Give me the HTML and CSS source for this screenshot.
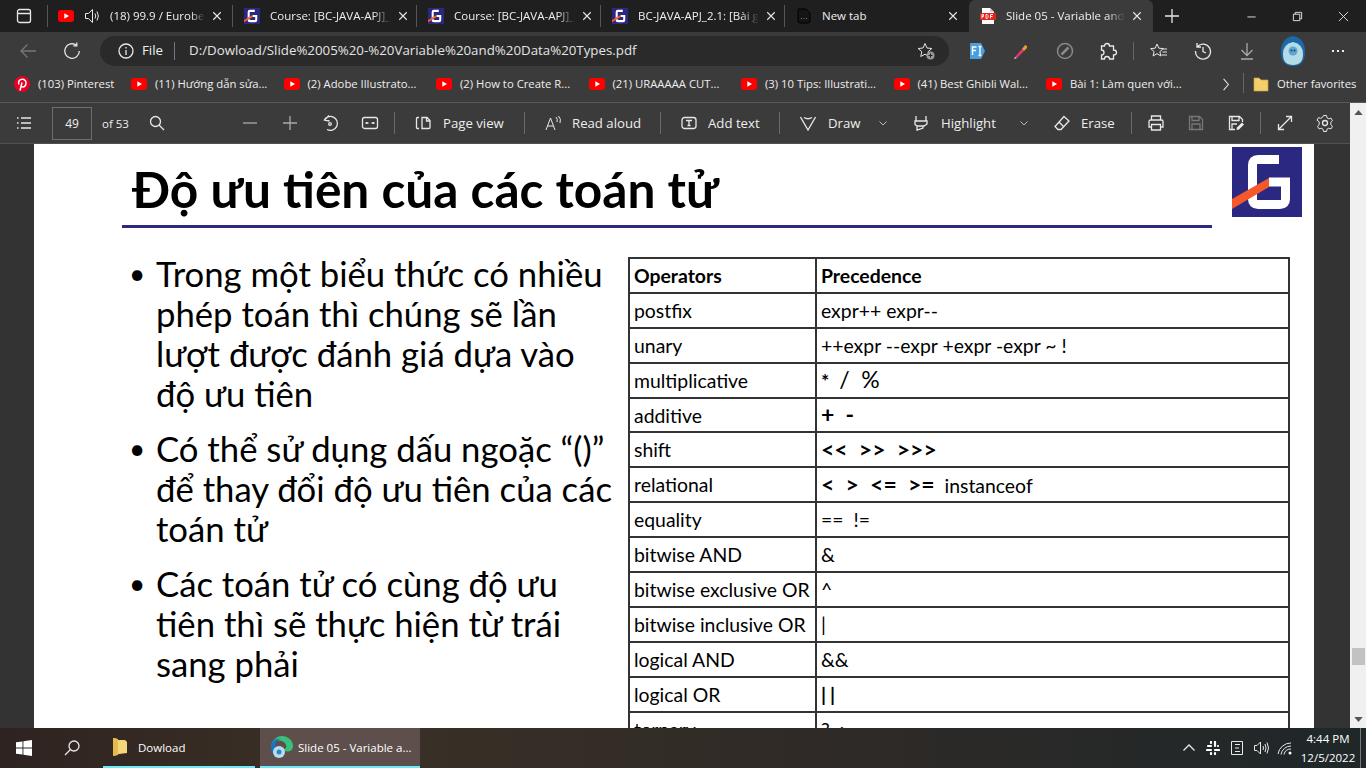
FILE: index.html
```html
<!DOCTYPE html>
<html lang="vi">

<head>
  <meta charset="UTF-8">
  <title>Slide 05 - Variable and Data Types.pdf</title>
  <link rel="stylesheet" href="styles.css">
</head>

<body>
  <svg class="defs" aria-hidden="true">
    <symbol id="yt" viewBox="0 0 16 12">
      <rect width="16" height="12" rx="3" fill="#f00" />
      <path d="M6.3 3.3 11 6l-4.7 2.700z" fill="#fff" />
    </symbol>
    <symbol id="glogo" viewBox="0 0 70 70">
      <rect width="70" height="70" fill="#2a2880" />
      <path d="M47 12.500H26q-5.500 0-5.500 5.500v34q0 5.500 5.500 5.500h22q5.500 0 5.500-5.500V35H37" fill="none" stroke="#fff" stroke-width="9" />
      <path d="M0 52 37 31v9L0 62z" fill="#f4592a" />
    </symbol>
    <symbol id="x" viewBox="0 0 12 12">
      <path d="M1.500 1.500l9 9m0-9l-9 9" fill="none" stroke="#e8e8e8" stroke-width="1.300" />
    </symbol>
    <symbol id="chev" viewBox="0 0 10 10">
      <path d="M1.500 3.500 5 7l3.500-3.500" fill="none" stroke="#bbb" stroke-width="1" />
    </symbol>
  </svg>

  <!-- tab strip -->
  <div class="tabstrip">
    <div class="tab-actions">
      <svg class="ic16" viewBox="0 0 16 16"><path d="M3.500 1.500h9a2 2 0 0 1 2 2v9a2 2 0 0 1-2 2h-9a2 2 0 0 1-2-2v-9a2 2 0 0 1 2-2zM1.500 5.500h13" class="ln" /></svg>
    </div>
    <div class="tab sep-after">
      <svg class="fav" viewBox="0 0 16 12"><use href="#yt" /></svg>
      <svg class="ic16 spk" viewBox="0 0 16 16"><path d="M1.500 5.500h3l4-4v13l-4-4h-3zM11 5.500q1.500 2.500 0 5M13 3.500q2.800 4.500 0 9" class="ln thin" /></svg>
      <span class="tab-title">(18) 99.9 / Eurobeat Mix</span>
      <svg class="tab-x" viewBox="0 0 12 12"><use href="#x" /></svg>
    </div>
    <div class="tab sep-after">
      <svg class="fav" viewBox="0 0 70 70"><use href="#glogo" /></svg>
      <span class="tab-title">Course: [BC-JAVA-APJ]_2.1</span>
      <svg class="tab-x" viewBox="0 0 12 12"><use href="#x" /></svg>
    </div>
    <div class="tab sep-after">
      <svg class="fav" viewBox="0 0 70 70"><use href="#glogo" /></svg>
      <span class="tab-title">Course: [BC-JAVA-APJ]_2.1</span>
      <svg class="tab-x" viewBox="0 0 12 12"><use href="#x" /></svg>
    </div>
    <div class="tab sep-after">
      <svg class="fav" viewBox="0 0 70 70"><use href="#glogo" /></svg>
      <span class="tab-title">BC-JAVA-APJ_2.1: [Bài giảng]</span>
      <svg class="tab-x" viewBox="0 0 12 12"><use href="#x" /></svg>
    </div>
    <div class="tab">
      <svg class="fav" viewBox="0 0 16 16"><path d="M3 1h7l4 4v8a2 2 0 0 1-2 2H4a2 2 0 0 1-2-2V2a1 1 0 0 1 1-1z" fill="#151515" stroke="#000" /><path d="M5 10.500h1m1.500 0h1m1.500 0h1" stroke="#777" /></svg>
      <span class="tab-title plain">New tab</span>
      <svg class="tab-x" viewBox="0 0 12 12"><use href="#x" /></svg>
    </div>
    <div class="tab active">
      <svg class="fav" viewBox="0 0 16 16"><path d="M2 0h8l4 4v12H2z" fill="#fff" /><path d="M10 0l4 4h-4z" fill="#ccc" /><rect x="0" y="5" width="16" height="7" fill="#e2231a" /><path d="M2 6.500v4M2 6.500h1.500v2H2M6 6.500v4h1.200l.8-1v-2l-.8-1zM10.500 6.500v4M10.500 6.500H13M10.500 8.500H12.500" stroke="#fff" fill="none" stroke-width=".9" /></svg>
      <span class="tab-title">Slide 05 - Variable and Data Types</span>
      <svg class="tab-x" viewBox="0 0 12 12"><use href="#x" /></svg>
    </div>
    <div class="new-tab">
      <svg class="ic16" viewBox="0 0 16 16"><path d="M8 1v14M1 8h14" class="ln" /></svg>
    </div>
    <div class="win-btns">
      <button class="win-btn"><svg viewBox="0 0 12 12"><path d="M1.500 6.500h9" class="ln thin" /></svg></button>
      <button class="win-btn"><svg viewBox="0 0 12 12"><path d="M1.500 3.500h7v7h-7zM3.500 3.500v-2h7v7h-2" class="ln thin" /></svg></button>
      <button class="win-btn"><svg viewBox="0 0 12 12"><path d="M1 1l10 10m0-10L1 11" class="ln thin" /></svg></button>
    </div>
  </div>

  <!-- address bar -->
  <div class="toolbar">
    <div class="ib back">
      <svg class="ic18" viewBox="0 0 18 18"><path d="M17 9H2M8.500 2.500 2 9l6.500 6.500" class="ln dim" /></svg>
    </div>
    <div class="ib reload">
      <svg class="ic18" viewBox="0 0 18 18"><path d="M13.500 3.300A7.300 7.300 0 1 0 16.300 9M13.800 0.500v3.400h-3.500" class="ln" /></svg>
    </div>
    <div class="address">
      <svg class="ic16" viewBox="0 0 16 16"><circle cx="8" cy="8" r="7" class="ln" /><path d="M8 7v5M8 4v1.500" class="ln" /></svg>
      <span class="addr-file">File</span>
      <span class="addr-sep"></span>
      <span class="addr-url">D:/Dowload/Slide%2005%20-%20Variable%20and%20Data%20Types.pdf</span>
      <svg class="addr-star" viewBox="0 0 18 18"><path d="M8 1.500l2 4.500 4.800.500-3.600 3.200 1 4.800L8 12.200l-4.200 2.300 1-4.800L1.200 6.500 6 6z" class="ln thin" /><circle cx="13.500" cy="13.500" r="4" fill="#999" /><path d="M13.500 11.500v4M11.500 13.500h4" stroke="#222" /></svg>
    </div>
    <div class="ib ib-first">
      <svg class="ic18" viewBox="0 0 18 18"><path d="M2 1h11l4 8-4 8H2z" fill="#4a9fe0" /><path d="M4.500 13V5h4M4.500 8.500h3.500M10.500 4.500h3M12 4.500v9M10.500 13.500h3" stroke="#fff" stroke-width="1.400" fill="none" /></svg>
    </div>
    <div class="ib">
      <svg class="ic18" viewBox="0 0 18 18"><path d="M3 15 10 7l2 2-7 7z" fill="#e8336c" /><path d="M2 17l1-2 2 1z" fill="#ddd" /><path d="M10 7l3-4 2 1 0 2-3 3z" fill="#f09a28" /></svg>
    </div>
    <div class="ib">
      <svg class="ic18" viewBox="0 0 18 18"><circle cx="9" cy="9" r="7.500" fill="none" stroke="#8a8a8a" stroke-width="1.500" /><path d="M5.500 12.500 12.500 5.500" stroke="#8a8a8a" stroke-width="2.500" /></svg>
    </div>
    <div class="ib">
      <svg class="ic18" viewBox="0 0 18 18"><path d="M7 1.500q2.500 0 2.500 2.500h4v4q3 0 3 2.500t-3 2.500v4h-4q0-2.500-2.500-2.500t-2.500 2.500h-3v-4q2.500 0 2.500-2.500T1.500 8V4h3Q4.500 1.500 7 1.500z" class="ln" /></svg>
    </div>
    <span class="tool-sep"></span>
    <div class="ib">
      <svg class="ic18" viewBox="0 0 18 18"><path d="M7 2l1.800 4.200 4.500.400-3.400 3 1 4.400L7 11.700 3.100 14l1-4.400-3.400-3 4.500-.400zM13 7h4M12.500 10h4.500M11.500 13h5.500" class="ln thin" /></svg>
    </div>
    <div class="ib">
      <svg class="ic18" viewBox="0 0 18 18"><path d="M3.500 4.500A7.500 7.500 0 1 1 1.500 9M3 1v4h4M9 5v4.500l3 1.500" class="ln" /></svg>
    </div>
    <div class="ib">
      <svg class="ic18" viewBox="0 0 18 18"><path d="M9 1v12M3.500 8 9 13.500 14.500 8M3 17h12" class="ln dim2" /></svg>
    </div>
    <div class="ib avatar">
      <svg class="ava" viewBox="0 0 24 30"><path d="M12 0q12 2 12 16 0 14-12 14T0 16Q0 2 12 0z" fill="#1a6aa8" /><path d="M12 6q10 2 10 12 0 11-10 11T2 18Q2 8 12 6z" fill="#b4dce6" /><circle cx="12" cy="15" r="4.500" fill="#5fa5d6" /><circle cx="10.500" cy="14.500" r="1" fill="#245" /><circle cx="13.500" cy="14.500" r="1" fill="#245" /></svg>
    </div>
    <div class="ib more">
      <svg class="ic18" viewBox="0 0 18 18"><path d="M3 9h2M8 9h2M13 9h2" stroke="#eee" stroke-width="2" /></svg>
    </div>
  </div>

  <!-- favorites -->
  <div class="favbar">
    <div class="fav-item first">
      <svg class="fav" viewBox="0 0 16 16"><circle cx="8" cy="8" r="8" fill="#e60023" /><path d="M6 14.500 8 6.500M4.800 8.500C3.800 5 6 3.300 8.300 3.300c2.500 0 3.900 1.700 3.700 3.800-.2 2.300-1.500 3.800-3.100 3.800-1 0-1.700-.6-1.700-1.300" fill="none" stroke="#fff" stroke-width="1.500" /></svg>
      <span>(103) Pinterest</span>
    </div>
    <div class="fav-item"><svg class="fav" viewBox="0 0 16 12"><use href="#yt" /></svg><span>(11) Hướng dẫn sửa...</span></div>
    <div class="fav-item"><svg class="fav" viewBox="0 0 16 12"><use href="#yt" /></svg><span>(2) Adobe Illustrato...</span></div>
    <div class="fav-item"><svg class="fav" viewBox="0 0 16 12"><use href="#yt" /></svg><span>(2) How to Create R...</span></div>
    <div class="fav-item"><svg class="fav" viewBox="0 0 16 12"><use href="#yt" /></svg><span>(21) URAAAAA CUT...</span></div>
    <div class="fav-item"><svg class="fav" viewBox="0 0 16 12"><use href="#yt" /></svg><span>(3) 10 Tips: Illustrati...</span></div>
    <div class="fav-item"><svg class="fav" viewBox="0 0 16 12"><use href="#yt" /></svg><span>(41) Best Ghibli Wal...</span></div>
    <div class="fav-item last"><svg class="fav" viewBox="0 0 16 12"><use href="#yt" /></svg><span>Bài 1: Làm quen với...</span></div>
    <svg class="fav-more" viewBox="0 0 10 16"><path d="M2 1l6 7-6 7" class="ln" /></svg>
    <span class="fav-sep"></span>
    <div class="fav-other">
      <svg class="fav" viewBox="0 0 16 16"><path d="M1 2h5l2 2h7v11H1z" fill="#f3d06a" stroke="#c9a23e" stroke-width=".7" /></svg>
      <span>Other favorites</span>
    </div>
  </div>

  <div class="viewer">
    <div class="viewer-main">
      <!-- pdf toolbar -->
      <div class="pdfbar">
        <div class="pb pb-list"><svg class="ic16" viewBox="0 0 16 16"><path d="M1 3h1.500M5 3h10M1 8h1.500M5 8h10M1 13h1.500M5 13h10" class="ln" /></svg></div>
        <div class="page-box">49</div>
        <span class="page-of">of 53</span>
        <div class="pb pb-search"><svg class="ic16" viewBox="0 0 16 16"><circle cx="6.500" cy="6.500" r="5" class="ln" /><path d="M10 10l5 5" class="ln" /></svg></div>
        <div class="pb pb-minus"><svg class="ic16" viewBox="0 0 16 16"><path d="M1 8h14" class="ln dim2" /></svg></div>
        <div class="pb"><svg class="ic16" viewBox="0 0 16 16"><path d="M8 1v14M1 8h14" class="ln dim2" /></svg></div>
        <div class="pb"><svg class="ic18" viewBox="0 0 18 18"><path d="M3 6.500A7 7 0 1 1 6 15.500M8 1.500 3.500 6l5 1" class="ln" /><circle cx="9" cy="10" r="1.300" class="ln" /></svg></div>
        <div class="pb"><svg class="ic18" viewBox="0 0 18 18"><rect x="1.500" y="3.500" width="15" height="11" rx="2" class="ln" /><path d="M4.500 9h3M13.500 9h-3M5.500 8v2M12.500 8v2" class="ln" /></svg></div>
        <span class="pdf-sep sep-a"></span>
        <div class="tool t-page">
          <svg class="ic16" viewBox="0 0 16 16"><path d="M4 2.500H2.500a1 1 0 0 0-1 1v9a1 1 0 0 0 1 1H4M7 2.500h5l3 3v7a1 1 0 0 1-1 1H7zM11.500 2.500v3.500H15" class="ln" /></svg>
          <span>Page view</span>
        </div>
        <span class="pdf-sep"></span>
        <div class="tool t-read">
          <svg class="ic16" viewBox="0 0 16 16"><path d="M1 15 5.500 3 10 15M2.500 11h6M11 2q2 2 1 5M13.500 1q3 3 1.500 7" class="ln thin" /></svg>
          <span>Read aloud</span>
        </div>
        <span class="pdf-sep"></span>
        <div class="tool t-add">
          <svg class="ic16" viewBox="0 0 16 16"><rect x="1" y="2.500" width="14" height="11" rx="2.500" class="ln" /><path d="M5 5.500h6M8 5.500v5M6.500 10.500h3" class="ln" /></svg>
          <span>Add text</span>
        </div>
        <span class="pdf-sep"></span>
        <div class="tool t-draw">
          <svg class="ic16" viewBox="0 0 16 16"><path d="M.5 2 8 15 15.500 2M4 2.500q4 2.500 8 0" class="ln" /></svg>
          <span>Draw</span>
          <svg class="chev" viewBox="0 0 10 10"><use href="#chev" /></svg>
        </div>
        <div class="tool t-high">
          <svg class="ic16" viewBox="0 0 16 16"><path d="M3 1v5h10V1M2 6h12v3l-3 2H4l-2-1.500zM4 11v4l6-2v-2" class="ln" /></svg>
          <span>Highlight</span>
          <svg class="chev" viewBox="0 0 10 10"><use href="#chev" /></svg>
        </div>
        <div class="tool t-erase">
          <svg class="ic16" viewBox="0 0 16 16"><path d="M10 1.500 15 6l-8 8.500H4L1 11.500zM5 7l5 5" class="ln" /></svg>
          <span>Erase</span>
        </div>
        <span class="pdf-sep"></span>
        <div class="pb pb-print"><svg class="ic18" viewBox="0 0 18 18"><path d="M4.500 6V2h9v4M4.500 13H2V7.500A1.500 1.500 0 0 1 3.500 6h11A1.500 1.500 0 0 1 16 7.500V13h-2.500M4.500 10.500h9v5.500h-9z" class="ln" /></svg></div>
        <div class="pb"><svg class="ic16" viewBox="0 0 16 16"><path d="M1.500 1.500h10l3 3v10h-13zM4 1.500v4h7v-4M4 14.500v-5.500h8v5.500" class="ln dim" /></svg></div>
        <div class="pb"><svg class="ic16" viewBox="0 0 16 16"><path d="M7 14.500H1.500v-13h10l3 3V7M4 1.500v4h7v-4M4 14v-5h5" class="ln" /><path d="M8.500 15 9 12.500 14 7.500l2 2-5 5z" fill="#eee" /></svg></div>
        <span class="pdf-sep sep-b"></span>
        <div class="pb pb-expand"><svg class="ic16" viewBox="0 0 16 16"><path d="M1.500 14.500l13-13M9 1.500h5.500V7M1.500 9v5.500H7" class="ln" /></svg></div>
        <div class="pb"><svg class="ic18" viewBox="0 0 18 18"><circle cx="9" cy="9" r="2.500" class="ln" /><path d="M7.500 1.500h3l.5 2.300 1.800 1 2.200-.7 1.500 2.600-1.700 1.600v2.400l1.700 1.600-1.500 2.600-2.200-.7-1.800 1-.5 2.300h-3l-.5-2.300-1.800-1-2.200.7-1.500-2.600 1.700-1.600V7.800L1 6.200l1.500-2.600 2.200.7 1.800-1z" class="ln thin" /></svg></div>
      </div>

      <!-- pdf page -->
      <div class="doc">
        <div class="slide">
          <div class="slide-head">
            <h1>Độ ưu tiên của các toán tử</h1>
            <svg class="slide-logo" viewBox="0 0 70 70"><use href="#glogo" /></svg>
          </div>
          <div class="slide-body">
            <ul class="points">
              <li>Trong một biểu thức có nhiều<br>phép toán thì chúng sẽ lần<br>lượt được đánh giá dựa vào<br>độ ưu tiên</li>
              <li>Có thể sử dụng dấu ngoặc “()”<br>để thay đổi độ ưu tiên của các<br>toán tử</li>
              <li>Các toán tử có cùng độ ưu<br>tiên thì sẽ thực hiện từ trái<br>sang phải</li>
            </ul>
            <table class="ops">
              <thead>
                <tr><th>Operators</th><th>Precedence</th></tr>
              </thead>
              <tbody>
                <tr><td>postfix</td><td>expr++ expr--</td></tr>
                <tr><td>unary</td><td>++expr --expr +expr -expr ~ !</td></tr>
                <tr><td>multiplicative</td><td><b>*</b> &nbsp;<span class="sym">/ &nbsp;%</span></td></tr>
                <tr><td>additive</td><td><b class="sym">+ &nbsp;-</b></td></tr>
                <tr><td>shift</td><td><b class="sym">&lt;&lt; &nbsp;&gt;&gt; &nbsp;&gt;&gt;&gt;</b></td></tr>
                <tr><td>relational</td><td><b class="sym">&lt; &nbsp;&gt; &nbsp;&lt;= &nbsp;&gt;=</b> &nbsp;instanceof</td></tr>
                <tr><td>equality</td><td>== &nbsp;!=</td></tr>
                <tr><td>bitwise AND</td><td>&amp;</td></tr>
                <tr><td>bitwise exclusive OR</td><td>^</td></tr>
                <tr><td>bitwise inclusive OR</td><td>|</td></tr>
                <tr><td>logical AND</td><td>&amp;&amp;</td></tr>
                <tr><td>logical OR</td><td><span class="pipes">||</span></td></tr>
                <tr><td>ternary</td><td>? &nbsp;:</td></tr>
              </tbody>
            </table>
          </div>
        </div>
      </div>
    </div>

    <div class="scrollbar">
      <svg class="sb-arrow" viewBox="0 0 10 6"><path d="M5 0l5 6H0z" fill="#555" /></svg>
      <div class="sb-track"><div class="sb-thumb"></div></div>
      <svg class="sb-arrow" viewBox="0 0 10 6"><path d="M5 6 0 0h10z" fill="#555" /></svg>
    </div>
  </div>

  <!-- windows taskbar -->
  <div class="taskbar">
    <div class="tb-ic">
      <svg class="ic16" viewBox="0 0 16 16"><path d="M0 2.300 6.500 1.400v6.200H0zM7.400 1.300 16 0v7.600H7.400zM0 8.400h6.500v6.200L0 13.700zM7.400 8.400H16V16l-8.600-1.200z" fill="#fff" /></svg>
    </div>
    <div class="tb-ic">
      <svg class="ic16" viewBox="0 0 16 16"><circle cx="10" cy="6" r="5" class="ln" /><path d="M6.500 9.500 1 15" class="ln" /></svg>
    </div>
    <div class="tb-app first">
      <svg class="app-ic" viewBox="0 0 16 20"><path d="M1 1l5 1v1h7l2 2v11l-8 1-5 2z" fill="#f5d67a" /><path d="M1 1l5 1v16l-5 1z" fill="#e6bb4c" /></svg>
      <span>Dowload</span>
    </div>
    <div class="tb-app current">
      <svg class="edge" viewBox="0 0 24 24"><path d="M12 1c6 0 11 4.500 11 10 0 3.500-2.500 5.500-5.500 5.500-2.500 0-4.500-1-4.500-2.500 2.500 0 4-1.500 3-4-1-3-4-4.500-7-4.500C5 5.500 2.500 8 1 11 2 5.500 6.500 1 12 1z" fill="#39c07c" /><path d="M1 12C1.500 6 6 3 10 4c-3 1-5 4-4.500 8 .3 3 1 6 4.500 10.500C5 22 1 17.500 1 12z" fill="#1576c4" /><circle cx="9" cy="17" r="6" fill="#b9dcef" /><circle cx="9" cy="17" r="2.500" fill="#2d86c4" /></svg>
      <span>Slide 05 - Variable a...</span>
    </div>
    <div class="tray">
      <div class="tray-ic"><svg class="ic12" viewBox="0 0 12 12"><path d="M.5 8.500 6 3l5.500 5.500" class="ln" /></svg></div>
      <div class="tray-ic"><svg class="ic14" viewBox="0 0 14 14"><path d="M5 1v1M2 5h3M9 1v4M12 5h0M1 9h4M5 12v1M9 9h4M9 12v1" stroke="#fff" stroke-width="2.200" stroke-linecap="round" /></svg></div>
      <div class="tray-ic"><svg class="ic14" viewBox="0 0 14 14"><path d="M1.500.5h11v13h-11zM5 3.500h5M5 7h4M5 10.500h5" class="ln thin" /></svg></div>
      <div class="tray-ic"><svg class="ic16" viewBox="0 0 16 16"><path d="M1.500 5.500h2.500l3.500-3.500v12l-3.500-3.500H1.500zM10 6q1 2 0 4M12 4q2 4 0 8M14 2.500q3 5.500 0 11" class="ln thin" /></svg></div>
      <div class="tray-ic"><svg class="ic16" viewBox="0 0 16 16"><path d="M1 14a13 13 0 0 1 13-11M4 14.500A10 10 0 0 1 14 6M7 14.500A7 7 0 0 1 14 9" class="ln thin" /><circle cx="13" cy="13" r="1.500" fill="#fff" /></svg></div>
    </div>
    <div class="clock"><span>4:44 PM</span><span>12/5/2022</span></div>
    <span class="show-desktop"></span>
  </div>
</body>

</html>
```

FILE: styles.css
```css
* {
  margin: 0;
  padding: 0;
  box-sizing: border-box;
}

html,
body {
  width: 1366px;
  height: 768px;
  overflow: hidden;
}

body {
  display: flex;
  flex-direction: column;
  font-family: 'Open Sans', 'Noto Sans', sans-serif;
  font-size: 12px;
  color: #eee;
  background: #333;
}

.defs {
  display: none;
}

svg {
  display: block;
  flex: none;
}

.ln {
  fill: none;
  stroke: #e8e8e8;
  stroke-width: 1.300;
}

.ln.thin {
  stroke-width: 1;
}

.ln.dim {
  stroke: #777;
}

.ln.dim2 {
  stroke: #aaa;
}

.ic12 {
  width: 12px;
  height: 12px;
}

.ic14 {
  width: 14px;
  height: 14px;
}

.ic16 {
  width: 16px;
  height: 16px;
}

.ic18 {
  width: 18px;
  height: 18px;
}

.fav {
  width: 16px;
  height: 16px;
}

/* tab strip */
.tabstrip {
  flex: 0 0 32px;
  display: flex;
  background: #1f1f1f;
}

.tab-actions {
  flex: 0 0 47px;
  padding-left: 16px;
  display: flex;
  align-items: center;
}

.tab {
  flex: 0 0 184px;
  min-width: 0;
  display: flex;
  align-items: center;
  padding: 0 11px;
}

.tab.sep-after {
  padding-right: 9px;
  position: relative;
}

/* the divider sits inside the dark strip, shorter than the tab */
.tab.sep-after::after {
  content: "";
  position: absolute;
  right: 0;
  top: 5px;
  bottom: 5px;
  width: 1px;
  background: #555;
}

.tab-actions + .tab {
  flex-basis: 186px;
  padding-left: 11px;
  position: relative;
}

.tab-actions + .tab::before {
  content: "";
  position: absolute;
  left: 0;
  top: 5px;
  bottom: 5px;
  width: 1px;
  background: #555;
}

.tab-actions + .tab .tab-x {
  margin-right: 2px;
}

.tab.active {
  background: #3b3b3b;
  border-radius: 6px 6px 0 0;
}

.tab-title {
  flex: 1;
  min-width: 0;
  margin: -2px 0 0 10px;
  white-space: nowrap;
  overflow: hidden;
  font-size: 11.500px;
  -webkit-mask-image: linear-gradient(to right, #000 85%, transparent);
  mask-image: linear-gradient(to right, #000 85%, transparent);
}

.tab-title.plain {
  -webkit-mask-image: none;
  mask-image: none;
}

.spk {
  margin-left: 10px;
}

.tab-x {
  width: 10px;
  height: 10px;
  margin-left: 7px;
}

.new-tab {
  margin-left: 11px;
  width: 16px;
  display: flex;
  align-items: center;
}

.win-btns {
  margin-left: auto;
  display: flex;
}

.win-btn {
  width: 46px;
  border: 0;
  background: none;
  display: flex;
  align-items: center;
  justify-content: center;
}

.win-btn svg {
  width: 11px;
  height: 11px;
}

/* address bar */
.toolbar {
  flex: 0 0 34px;
  display: flex;
  align-items: center;
  background: #3b3b3b;
  padding-top: 4px;
}

.ib {
  flex: 0 0 44px;
  display: flex;
  justify-content: center;
}

.ib.back {
  flex-basis: 40px;
  margin-left: 8px;
}

.ib.reload {
  flex-basis: 40px;
  margin-left: 4px;
}

.ib-first {
  margin-left: 6px;
}

.address {
  flex: 0 0 849px;
  height: 30px;
  margin-left: 8px;
  border-radius: 15px;
  background: #2a2a2a;
  display: flex;
  align-items: center;
  padding: 0 14px 0 18px;
}

.addr-file {
  margin: -2px 0 0 8px;
  font-size: 13.300px;
}

.addr-sep {
  width: 1px;
  height: 18px;
  margin: 0 14px 0 11px;
  background: #777;
}

.addr-url {
  margin-top: -2px;
  font-size: 13.300px;
  color: #e4e4e4;
  white-space: nowrap;
}

.addr-star {
  margin-left: auto;
  width: 18px;
  height: 18px;
}

.tool-sep {
  width: 1px;
  height: 18px;
  margin: 0 3px 0 2px;
  background: #666;
}

.ava {
  width: 24px;
  height: 30px;
}

.avatar {
  margin-left: 2px;
}

.more {
  margin-left: 1px;
}

/* favorites */
.favbar {
  flex: 0 0 37px;
  display: flex;
  align-items: center;
  background: #3b3b3b;
  border-bottom: 1px solid #595959;
  font-size: 11.300px;
  padding-left: 14px;
  white-space: nowrap;
}

.favbar span {
  margin-top: -2px;
}

.fav-item {
  flex: 0 0 152.500px;
  display: flex;
  align-items: center;
  gap: 8px;
}

.fav-item.first {
  flex-basis: 117px;
}

.fav-item.last {
  flex-basis: 176px;
}

.fav-more {
  width: 8px;
  height: 13px;
}

.fav-sep {
  width: 1px;
  height: 20px;
  margin: 0 9px 0 13px;
  background: #666;
}

.fav-other {
  display: flex;
  align-items: center;
  gap: 8px;
}

/* viewer */
.viewer {
  flex: 1;
  min-height: 0;
  display: flex;
}

.viewer-main {
  flex: 1;
  min-width: 0;
  display: flex;
  flex-direction: column;
}

.pdfbar {
  flex: 0 0 41px;
  display: flex;
  align-items: center;
  background: #3b3b3b;
  border-bottom: 1px solid #505050;
  font-size: 13.200px;
  padding-left: 4px;
  white-space: nowrap;
}

.pb {
  flex: 0 0 40px;
  display: flex;
  justify-content: center;
}

.page-box {
  flex: 0 0 40px;
  height: 33px;
  margin-left: 8px;
  border: 1px solid #6e6e6e;
  display: flex;
  align-items: center;
  justify-content: center;
  font-size: 12px;
}

.page-of {
  flex: 0 0 27px;
  margin-left: 10px;
  font-size: 11.500px;
}

.pb-search {
  margin-left: 8px;
}

.pb-minus {
  margin-left: 53px;
}

.pdf-sep {
  flex: 0 0 1px;
  height: 22px;
  background: #6a6a6a;
}

.sep-a {
  margin-left: 4px;
}

.sep-b {
  margin-left: 4px;
}

.pb-print {
  margin-left: 4px;
}

.pb-expand {
  margin-left: 4px;
}

.tool {
  display: flex;
  align-items: center;
  gap: 12px;
  padding-left: 20px;
}

.chev {
  width: 10px;
  height: 10px;
  margin-left: auto;
  margin-right: 5px;
}

.t-page {
  flex: 0 0 129px;
}

.t-read {
  flex: 0 0 135px;
  gap: 11px;
}

.t-add {
  flex: 0 0 118px;
  gap: 11px;
}

.t-draw {
  flex: 0 0 113px;
}

.t-high {
  flex: 0 0 141px;
}

.t-erase {
  flex: 0 0 97px;
  gap: 11px;
}

.doc {
  flex: 1;
  min-height: 0;
  overflow: hidden;
  padding-left: 34px;
  background: #333;
}

/* slide */
.slide {
  width: 1280px;
  height: 100%;
  overflow: hidden;
  background: #fff;
  color: #000;
  font-family: Lato, 'Noto Sans', sans-serif;
}

.slide-head {
  display: flex;
  align-items: flex-start;
  padding: 3px 0 0 88px;
}

.slide-head h1 {
  flex: 0 0 1090px;
  height: 84px;
  margin-top: -3px;
  border-bottom: 3px solid #2a2880;
  padding: 15px 0 0 10px;
  font-size: 49.600px;
  line-height: 60px;
  font-weight: 700;
}

.slide-logo {
  width: 70px;
  height: 70px;
  margin-left: 20px;
}

.slide-body {
  display: grid;
  grid-template-columns: 507px 662px;
  margin: 29px 0 0 88px;
}

.points {
  list-style: none;
  font-size: 34.700px;
  line-height: 40px;
  margin-top: -3px;
}

.points li {
  position: relative;
  padding-left: 34px;
  margin-bottom: 15px;
  white-space: nowrap;
}

.points li::before {
  content: "•";
  position: absolute;
  left: 7px;
  font-size: 28px;
  line-height: 38px;
}

.ops {
  width: 662px;
  margin-left: -1px;
  table-layout: fixed;
  border-collapse: collapse;
  font-size: 19.400px;
}

.ops th:first-child,
.ops td:first-child {
  width: 187px;
}

.ops th,
.ops td {
  height: 34.900px;
  padding: 0 3px 0 4px;
  border: 2px solid #333;
  text-align: left;
  white-space: nowrap;
}

.ops th {
  font-weight: 700;
}

.sym {
  font-size: 23px;
  line-height: 1;
}

.pipes {
  letter-spacing: 4px;
  font-weight: 700;
}

/* scrollbar */
.scrollbar {
  flex: 0 0 16px;
  display: flex;
  flex-direction: column;
  align-items: center;
  background: #f0f0f0;
  padding: 7px 0 6px;
}

.sb-arrow {
  width: 9px;
  height: 5px;
}

.sb-track {
  flex: 1;
  width: 100%;
  padding-top: 533px;
}

.sb-thumb {
  width: 13px;
  height: 17px;
  margin: 0 auto;
  background: #c2c2c2;
}

/* taskbar */
.taskbar {
  flex: 0 0 40px;
  display: flex;
  align-items: center;
  background: linear-gradient(to right, #2f2321, #3a3126 25%, #2f2a27 60%, #1f2729);
  color: #fff;
}

.tb-ic {
  flex: 0 0 48px;
  display: flex;
  justify-content: center;
}

.tb-app {
  flex: 0 0 152px;
  height: 40px;
  display: flex;
  align-items: center;
  gap: 10px;
  padding-left: 9px;
  border-bottom: 2px solid #6fe8f5;
  font-size: 11.500px;
  white-space: nowrap;
}

.tb-app.first {
  margin-left: 7px;
}

.tb-app.current {
  flex-basis: 160px;
  margin-left: 5px;
  padding-left: 10px;
  gap: 4px;
  background: #5e4f4c;
}

.app-ic {
  width: 16px;
  height: 20px;
}

.edge {
  width: 24px;
  height: 24px;
}

.tray {
  margin-left: 757px;
  display: flex;
}

.tray-ic {
  flex: 0 0 24px;
  display: flex;
  justify-content: center;
  align-items: center;
}

.clock {
  flex: 0 0 58px;
  margin-left: 2px;
  display: flex;
  flex-direction: column;
  align-items: center;
  font-size: 11.500px;
  line-height: 19px;
}

.show-desktop {
  width: 1px;
  height: 40px;
  margin-left: 3px;
  background: #777;
}
```
